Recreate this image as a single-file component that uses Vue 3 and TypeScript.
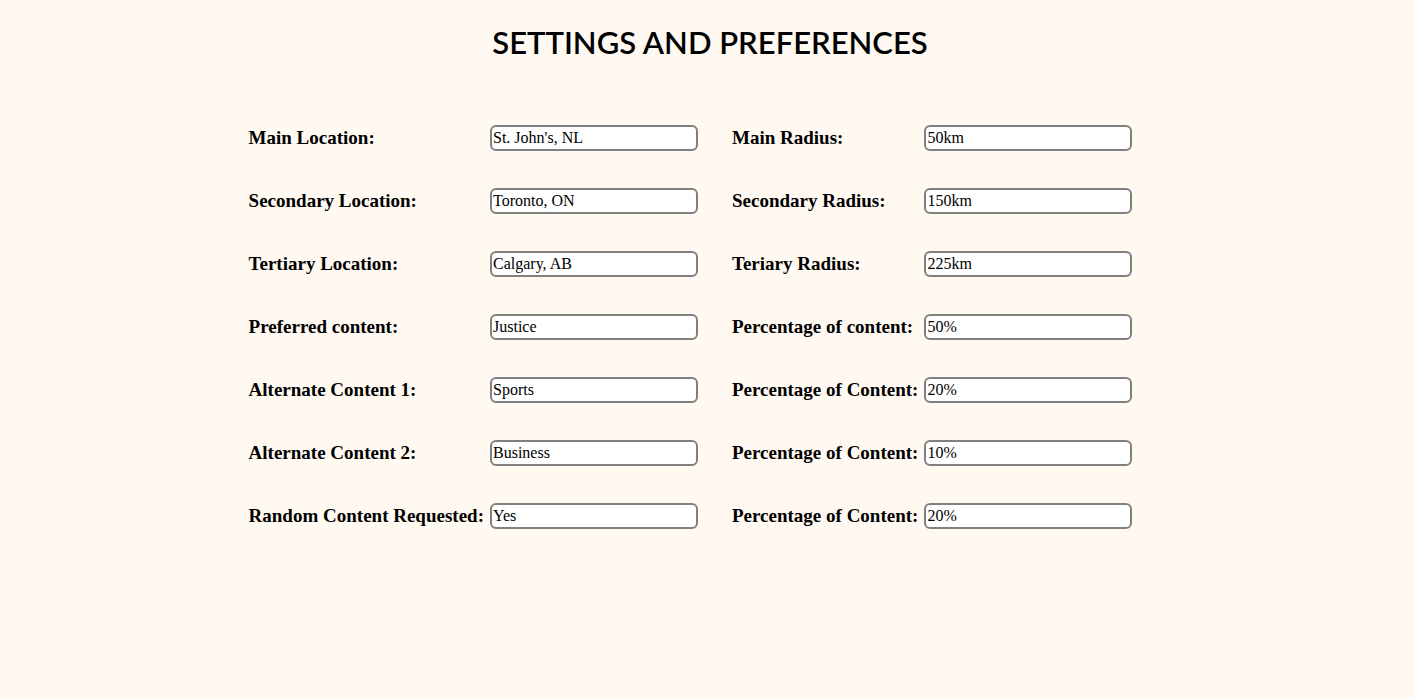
<script setup lang="ts">
import { reactive } from 'vue'

interface Field {
  id: string
  label: string
  value: string
}

const groups = reactive<Field[][]>([
  [
    { id: 'main-location', label: 'Main Location:', value: "St. John's, NL" },
    { id: 'secondary-location', label: 'Secondary Location:', value: 'Toronto, ON' },
    { id: 'tertiary-location', label: 'Tertiary Location:', value: 'Calgary, AB' },
    { id: 'preferred-content', label: 'Preferred content:', value: 'Justice' },
    { id: 'alternate-content-1', label: 'Alternate Content 1:', value: 'Sports' },
    { id: 'alternate-content-2', label: 'Alternate Content 2:', value: 'Business' },
    { id: 'random-content', label: 'Random Content Requested:', value: 'Yes' },
  ],
  [
    { id: 'main-radius', label: 'Main Radius:', value: '50km' },
    { id: 'secondary-radius', label: 'Secondary Radius:', value: '150km' },
    { id: 'tertiary-radius', label: 'Teriary Radius:', value: '225km' },
    { id: 'preferred-percentage', label: 'Percentage of content:', value: '50%' },
    { id: 'alternate-1-percentage', label: 'Percentage of Content:', value: '20%' },
    { id: 'alternate-2-percentage', label: 'Percentage of Content:', value: '10%' },
    { id: 'random-percentage', label: 'Percentage of Content:', value: '20%' },
  ],
])
</script>

<template>
  <main class="page">
    <h1 class="title">SETTINGS AND PREFERENCES</h1>
    <form class="settings" @submit.prevent>
      <div v-for="(group, index) in groups" :key="index" class="group">
        <template v-for="field in group" :key="field.id">
          <label class="label" :for="field.id">{{ field.label }}</label>
          <input :id="field.id" v-model="field.value" class="input" type="text" />
        </template>
      </div>
    </form>
  </main>
</template>

<style>
body {
  margin: 0;
  background: #fff9f2;
}
</style>

<style scoped>
.page {
  padding: 20px 0;
  color: #000;
  font-family: "Liberation Serif", "Times New Roman", serif;
}

.title {
  margin: 0 0 60px;
  padding-left: 5px;
  font-family: Lato, "Liberation Sans", sans-serif;
  font-size: 31px;
  font-weight: 600;
  line-height: 45px;
  text-align: center;
}

.settings {
  display: flex;
  flex-wrap: wrap;
  justify-content: center;
}

.group {
  display: grid;
  grid-template-columns: max-content 208px;
  align-content: start;
  align-items: center;
  gap: 37px 6px;
  padding-right: 34px;
}

.label {
  font-size: 19px;
  font-weight: 700;
  line-height: 22px;
}

.input {
  box-sizing: border-box;
  width: 100%;
  height: 26px;
  padding: 1px;
  border: 2px solid #808080;
  border-radius: 6px;
  background: #fff;
  color: #000;
  font-family: inherit;
  font-size: 16px;
}
</style>
